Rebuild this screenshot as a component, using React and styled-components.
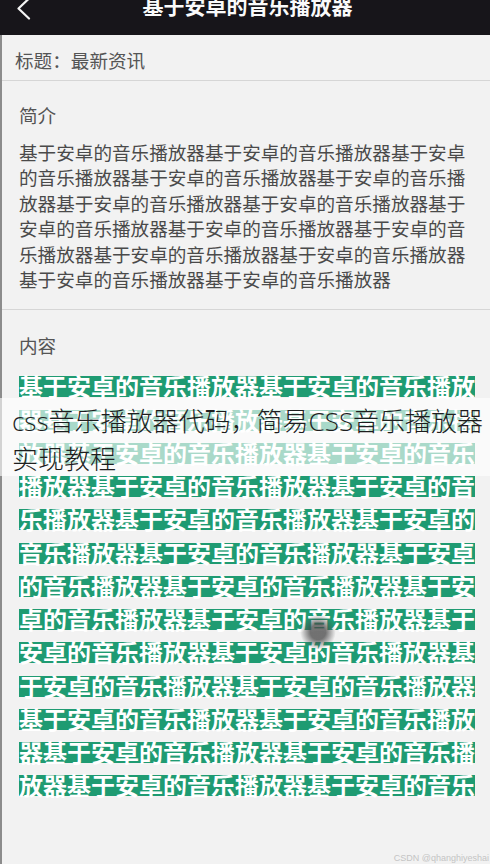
import styled, { createGlobalStyle } from "styled-components";

const GlobalStyle = createGlobalStyle`
  html, body {
    margin: 0;
    padding: 0;
    background: #f2f2f2;
    font-family: "Noto Sans CJK SC", "Noto Sans", sans-serif;
  }
  * {
    box-sizing: border-box;
  }
`;

const unit = "基于安卓的音乐播放器";
const summaryText = unit.repeat(14);
const contentText = unit.repeat(24) + "基于安卓的音乐";

function App() {
  return (
    <Page>
      <GlobalStyle />
      <TopBar>
        <BackButton aria-label="back">
          <svg width="16" height="36" viewBox="0 0 16 36">
            <polyline
              points="14,10.5 3.5,20.5 14,30.5"
              fill="none"
              stroke="#f4f4f4"
              strokeWidth="2.2"
              strokeLinecap="round"
              strokeLinejoin="round"
            />
          </svg>
        </BackButton>
        <BarTitle>基于安卓的音乐播放器</BarTitle>
        <BarSpacer />
      </TopBar>

      <Body>
        <TitleRow>标题：最新资讯</TitleRow>

        <Section $divider>
          <SectionLabel>简介</SectionLabel>
          <Summary>{summaryText}</Summary>
        </Section>

        <Section $top={22}>
          <SectionLabel>内容</SectionLabel>
          <ContentText>
            <Highlight>{contentText}</Highlight>
          </ContentText>
        </Section>
      </Body>

      <Caption>css音乐播放器代码，简易CSS音乐播放器实现教程</Caption>
      <TouchDot />
      <Watermark>CSDN @qhanghiyeshai</Watermark>
    </Page>
  );
}

const Page = styled.div`
  position: relative;
  min-height: 100vh;
  display: flex;
  flex-direction: column;
  overflow: hidden;
`;

const TopBar = styled.header`
  height: 35px;
  padding-bottom: 24px;
  background: #17151a;
  display: flex;
  align-items: center;
  flex-shrink: 0;
`;

const BackButton = styled.button`
  width: 40px;
  height: 5px;
  border: 0;
  background: none;
  padding: 0 0 0 15px;
  display: flex;
  align-items: center;
  svg {
    display: block;
    flex-shrink: 0;
  }
`;

const BarSpacer = styled.span`
  width: 40px;
`;

const BarTitle = styled.h1`
  flex: 1;
  margin: 0;
  text-align: center;
  color: #fafafa;
  font-size: 21px;
  line-height: 21px;
  font-weight: 700;
  padding-left: 5px;
`;

const Body = styled.main`
  flex: 1;
  border-left: 2px solid #8c8c8c;
  display: flex;
  flex-direction: column;
`;

const TitleRow = styled.div`
  height: 46px;
  padding: 4px 0 0 13px;
  border-bottom: 1px solid #d6d6d6;
  display: flex;
  align-items: center;
  color: #555;
  font-size: 18.6px;
`;

const Section = styled.section`
  padding: ${(p) => p.$top || 21}px 11px 18px 17px;
  border-bottom: ${(p) => (p.$divider ? "1px solid #d6d6d6" : "0")};
`;

const SectionLabel = styled.h2`
  margin: 0 0 11px;
  font-size: 18.6px;
  line-height: 26px;
  font-weight: 400;
  color: #555;
`;

const Summary = styled.p`
  margin: 0;
  font-size: 18.6px;
  line-height: 25.4px;
  color: #4a4a4a;
  word-break: break-all;
`;

const ContentText = styled.p`
  margin: 0;
  font-size: 24px;
  line-height: 33.25px;
  font-weight: 700;
  color: #fff;
  word-break: break-all;
`;

const Highlight = styled.span`
  background: linear-gradient(
    to bottom,
    transparent 24%,
    #1f9b72 24%,
    #1f9b72 84%,
    transparent 84%
  );
`;

const Caption = styled.div`
  position: absolute;
  top: 398px;
  left: 0;
  right: 0;
  padding: 4px 0 0 12px;
  height: 78px;
  background: rgba(255, 255, 255, 0.62);
  font-family: "Open Sans", "Noto Sans CJK SC", sans-serif;
  font-weight: 300;
  font-size: 26px;
  line-height: 38px;
  color: #1e1e1e;
`;

const TouchDot = styled.div`
  position: absolute;
  left: 300px;
  top: 614px;
  width: 36px;
  height: 36px;
  border-radius: 50%;
  background: radial-gradient(circle, rgba(70, 70, 70, 0.75) 30%, rgba(70, 70, 70, 0) 70%);
`;

const Watermark = styled.div`
  position: absolute;
  right: 1px;
  bottom: 1px;
  font-family: "Liberation Sans", sans-serif;
  font-size: 9px;
  color: #c4c4c4;
`;

export default App;
